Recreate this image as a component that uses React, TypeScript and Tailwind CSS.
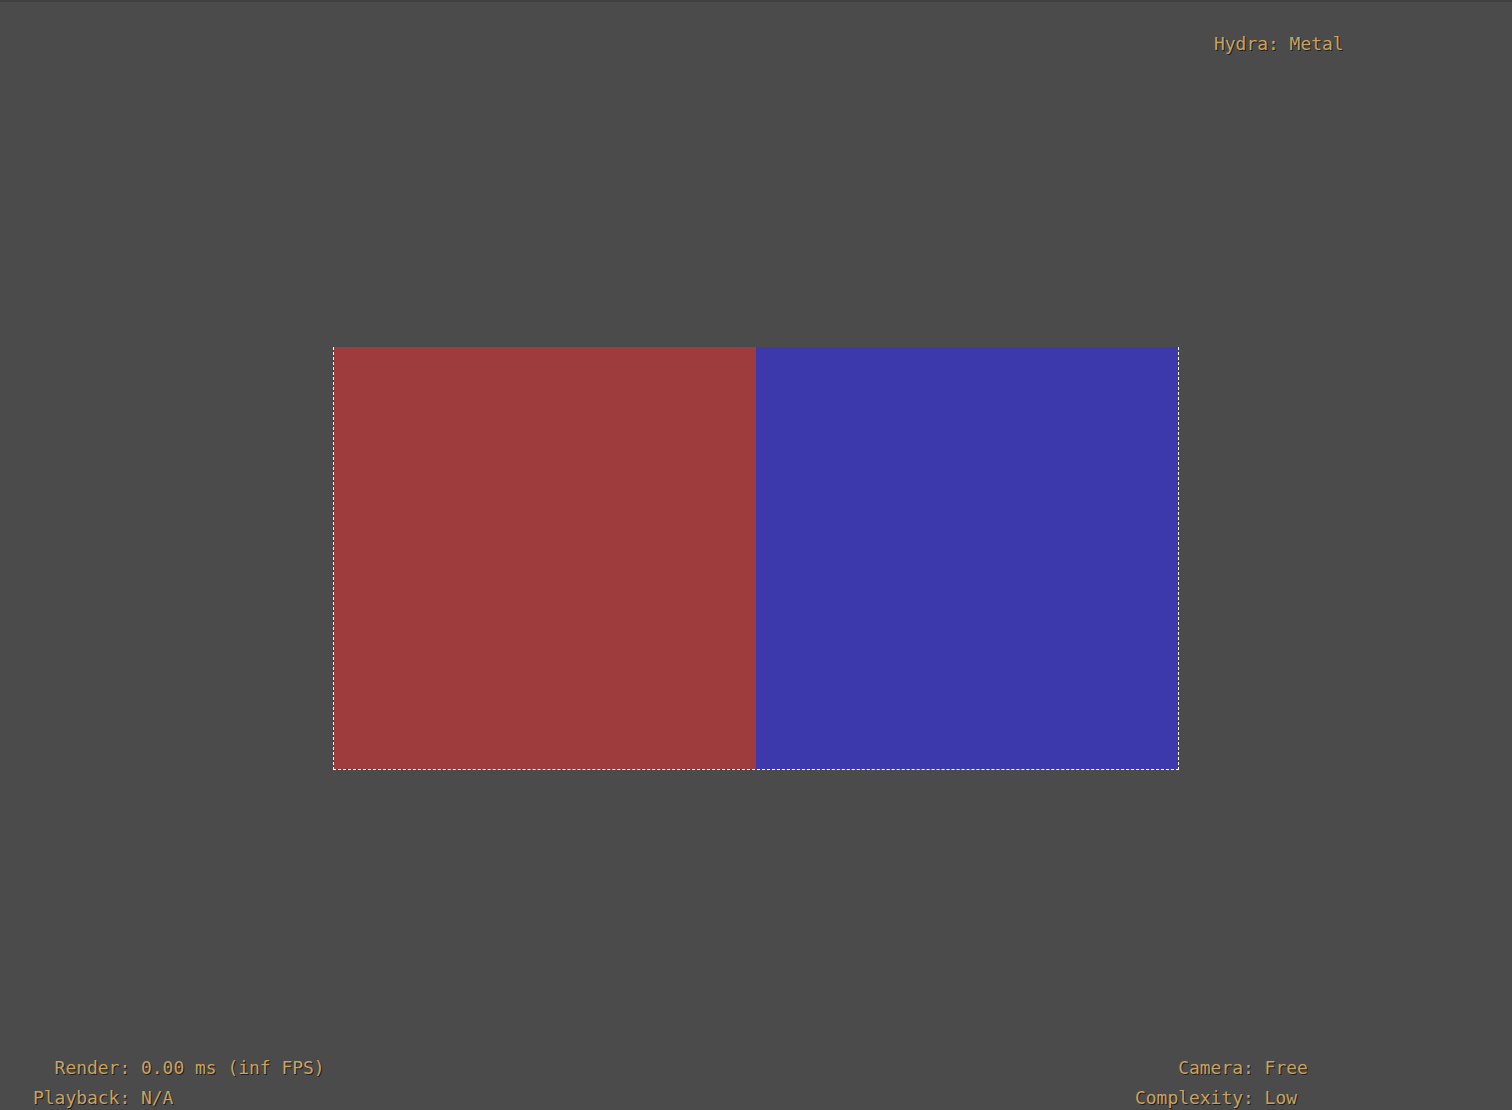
const hud = "text-[#c9a25f] text-[17.95px] leading-[30px] [font-family:'DejaVu_Sans_Mono','Liberation_Mono',monospace] [text-shadow:1px_1px_0_#1e1e1e] whitespace-pre";

function Stat({ label, value }: { label: string; value: string }) {
  return (
    <>
      <span className="text-right">{label}</span>
      <span>{value}</span>
    </>
  );
}

export default function App() {
  return (
    <div className="relative h-[1110px] w-full overflow-hidden bg-[#4b4b4b] border-t-2 border-[#414141]">
      <div className="flex h-full items-center justify-center pt-[4px]">
        <div className="flex h-[423px] w-[846px] border-x border-b border-dashed border-white">
          <div className="h-full flex-1 bg-[#9e3b3c]" />
          <div className="h-full flex-1 bg-[#3b39ab]" />
        </div>
      </div>

      <div className={`absolute left-[1214px] top-[27px] ${hud}`}>Hydra: Metal</div>

      <div className={`absolute left-[33px] top-[1051px] grid grid-cols-[auto_auto] gap-x-[10.8px] ${hud}`}>
        <Stat label="Render:" value="0.00 ms (inf FPS)" />
        <Stat label="Playback:" value="N/A" />
      </div>

      <div className={`absolute left-[1135px] top-[1051px] grid grid-cols-[auto_auto] gap-x-[10.8px] ${hud}`}>
        <Stat label="Camera:" value="Free" />
        <Stat label="Complexity:" value="Low" />
      </div>
    </div>
  );
}
